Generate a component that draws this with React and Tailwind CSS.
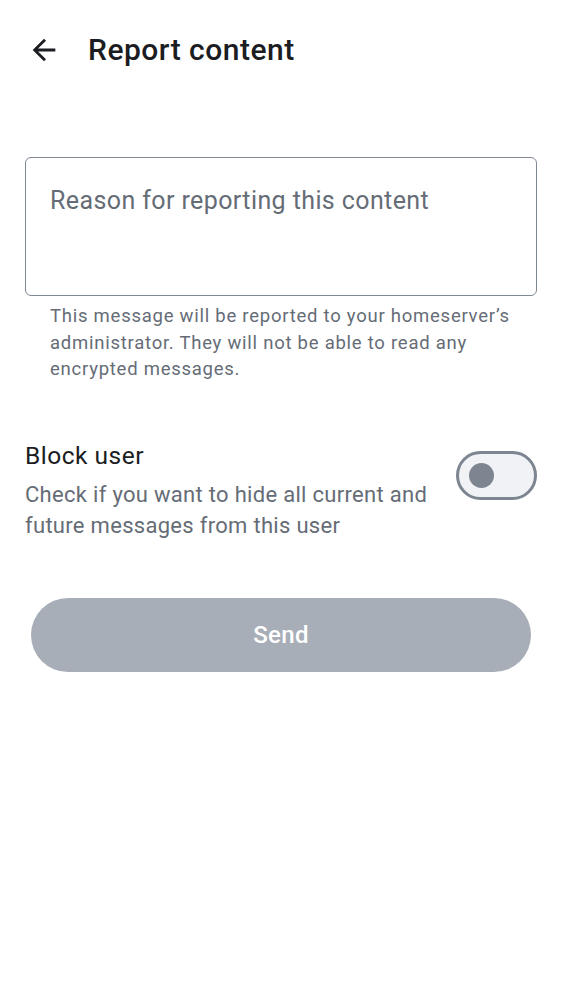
import { useState } from 'react';

function BackArrow() {
  return (
    <svg viewBox="0 0 24 24" className="w-[34px] h-[34px] fill-[#1b1d22]">
      <path d="M20 11H7.83l5.59-5.59L12 4l-8 8 8 8 1.41-1.41L7.83 13H20v-2z" />
    </svg>
  );
}

function Toggle({ on, onChange }) {
  return (
    <button
      onClick={() => onChange(!on)}
      className="w-[81px] h-[49px] shrink-0 rounded-full border-[3px] border-[#7d8591] bg-[#f0f2f5] flex items-center pl-[10px]"
    >
      <span className="block w-[25px] h-[25px] rounded-full bg-[#7d8591]" />
    </button>
  );
}

export default function App() {
  const [blockUser, setBlockUser] = useState(false);
  const [reason, setReason] = useState('');

  return (
    <div className="min-h-[1000px] bg-white font-['Roboto',sans-serif]">
      <header className="h-[99px] flex items-center pl-[27px]">
        <BackArrow />
        <h1 className="ml-[27px] text-[30px] font-medium text-[#1b1d22] tracking-[0.5px]">Report content</h1>
      </header>

      <div className="px-[25px] pt-[58px]">
        <textarea
          value={reason}
          onChange={(e) => setReason(e.target.value)}
          placeholder="Reason for reporting this content"
          className="block w-full h-[139px] resize-none rounded-[6px] border-[1.5px] border-[#7f8791] px-[24px] pt-[27px] text-[25px] leading-[32px] tracking-[0.4px] text-[#1b1d22] placeholder:text-[#656c76] outline-none"
        />
        <p className="mt-[7px] pl-[25px] pr-[8px] text-[18.5px] leading-[26.5px] tracking-[0.75px] text-[#656c76]">
          This message will be reported to your homeserver’s administrator. They will not be able to read any encrypted messages.
        </p>

        <div className="mt-[57px] flex items-start gap-[20px]">
          <div className="flex-1">
            <div className="text-[24.5px] leading-[31px] tracking-[0.5px] text-[#1b1d22]">Block user</div>
            <div className="mt-[8px] text-[22px] leading-[31px] tracking-[0.3px] text-[#656c76]">
              Check if you want to hide all current and future messages from this user
            </div>
          </div>
          <div className="pt-[11px]">
            <Toggle on={blockUser} onChange={setBlockUser} />
          </div>
        </div>

        <div className="mt-[57px] px-[6px]">
          <button className="w-full h-[74px] rounded-full bg-[#a8aeb7] text-white text-[24px] font-medium tracking-[0.3px]">
            Send
          </button>
        </div>
      </div>
    </div>
  );
}
